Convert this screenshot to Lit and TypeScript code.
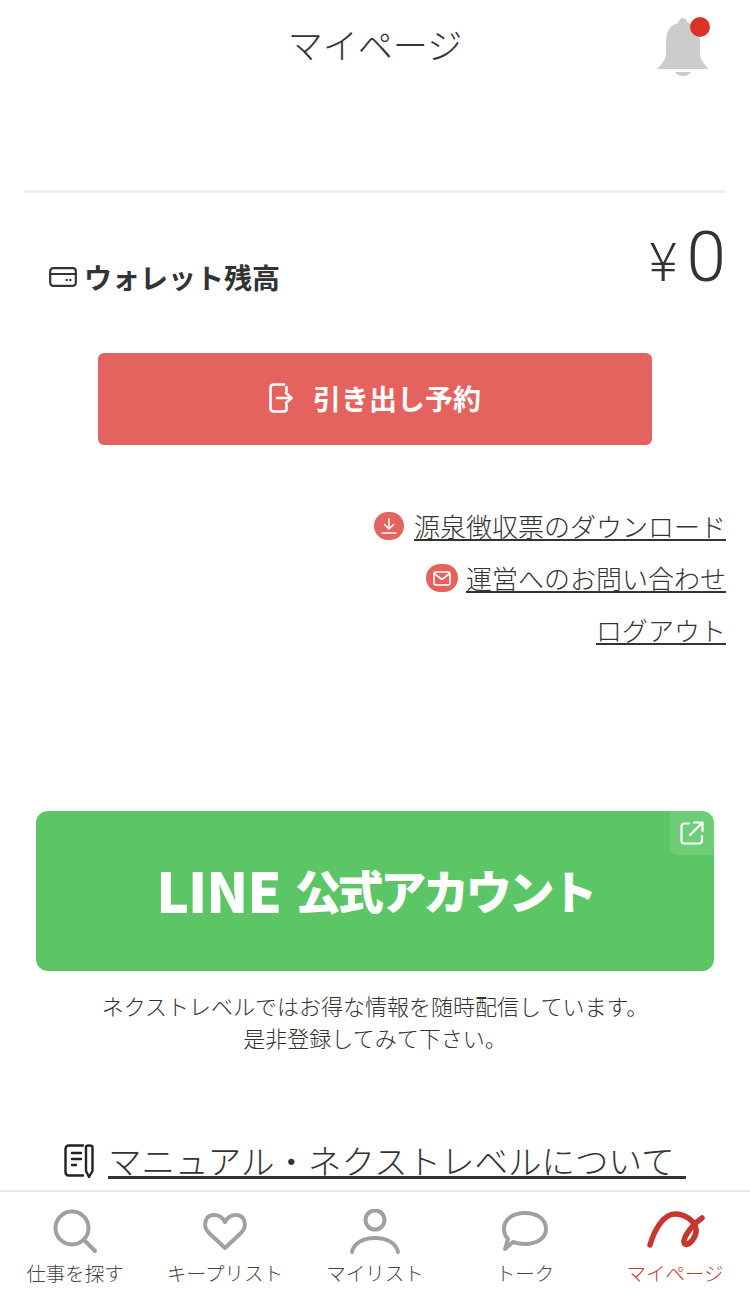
import { LitElement, html, css, svg } from "lit";
import { customElement } from "lit/decorators.js";

const tabs = [
  {
    label: "仕事を探す",
    icon: svg`<circle cx="27" cy="19" r="16.5"/><path d="M39 31 L50 42"/>`,
  },
  {
    label: "キープリスト",
    icon: svg`<path d="M30 39 L14 24 C7 17 10 6 19 6 C24 6 28 9 30 13 C32 9 36 6 41 6 C50 6 53 17 46 24 Z"/>`,
  },
  {
    label: "マイリスト",
    icon: svg`<circle cx="30" cy="11" r="9.5"/><path d="M7 43 C9 34 18 29 30 29 C42 29 51 34 53 43"/>`,
  },
  {
    label: "トーク",
    icon: svg`<path d="M10 40 L13 30 C10 27 9 23 9 20 C9 10 18 4 30 4 C42 4 51 10 51 20 C51 29 42 35 30 35 C25 35 21 34 18 33 Z"/>`,
  },
  {
    label: "マイページ",
    active: true,
    icon: svg`<path d="M5 36 C9 22 18 5 30 5 C40 5 50 12 51 20 C52 28 44 37 40 35 C36 33 43 19 57 9"/>`,
  },
];

@customElement("app-root")
export class AppRoot extends LitElement {
  static styles = css`
    :host {
      display: block;
      font-family: "Noto Sans CJK JP", sans-serif;
      color: #333;
      background: #fff;
    }
    .page {
      height: 1291px;
      display: flex;
      flex-direction: column;
      overflow: hidden;
    }
    .main {
      flex: 1;
      min-height: 0;
      overflow: hidden;
    }
    .header {
      position: relative;
      height: 190px;
      margin: 0 24px;
      border-bottom: 3px solid #eeeeee;
      text-align: center;
    }
    .title {
      font-size: 35px;
      font-weight: 300;
      line-height: 87px;
    }
    .bell {
      position: absolute;
      left: 633px;
      top: 18px;
      width: 52px;
      height: 58px;
    }
    .bell svg {
      display: block;
      fill: #cccccc;
    }
    .dot {
      position: absolute;
      left: 33px;
      top: -1px;
      width: 20px;
      height: 20px;
      border-radius: 50%;
      background: #dc3329;
    }
    .wallet {
      height: 106px;
      margin: 0 24px;
      display: flex;
      justify-content: space-between;
      align-items: flex-start;
    }
    .wallet-label {
      display: flex;
      align-items: center;
      gap: 7px;
      margin: 63px 0 0 25px;
      font-size: 28px;
      font-weight: 700;
      line-height: 42px;
    }
    .balance {
      display: flex;
      align-items: baseline;
      gap: 9px;
      margin: 20px 0 0 0;
      line-height: 88px;
    }
    .yen {
      font-size: 54px;
      font-weight: 300;
    }
    .amount {
      font-family: Roboto, sans-serif;
      font-size: 71px;
      font-weight: 300;
    }
    .withdraw {
      width: 554px;
      height: 92px;
      margin: 54px auto 0;
      box-sizing: border-box;
      padding-bottom: 2px;
      display: flex;
      align-items: center;
      justify-content: center;
      gap: 20px;
      border-radius: 6px;
      background: #e5635e;
      color: #fff;
      font-size: 28px;
      font-weight: 700;
    }
    .links {
      margin: 55px 24px 0;
      display: flex;
      flex-direction: column;
      align-items: flex-end;
    }
    .link {
      height: 52px;
      display: flex;
      align-items: center;
      gap: 10px;
    }
    .link span {
      font-size: 26px;
      font-weight: 300;
      line-height: 27px;
      border-bottom: 2px solid #333;
    }
    .badge {
      width: 30px;
      height: 28px;
      border-radius: 14px;
      background: #e5635e;
      display: flex;
      align-items: center;
      justify-content: center;
    }
    .badge.mail {
      width: 32px;
      margin-right: -2px;
    }
    .line {
      position: relative;
      height: 160px;
      box-sizing: border-box;
      padding-bottom: 4px;
      margin: 155px 36px 0;
      border-radius: 12px;
      background: #5cc666;
      color: #fff;
      display: flex;
      align-items: center;
      justify-content: center;
      font-weight: 900;
      white-space: nowrap;
    }
    .line-en {
      font-size: 55px;
      margin-right: 14px;
      letter-spacing: -1px;
    }
    .line-ja {
      font-size: 46px;
      letter-spacing: -3.3px;
    }
    .ext {
      position: absolute;
      right: 0;
      top: 0;
      width: 44px;
      height: 44px;
      border-radius: 0 12px 0 8px;
      background: rgba(255, 255, 255, 0.12);
      display: flex;
      align-items: center;
      justify-content: center;
    }
    .desc {
      margin-top: 18px;
      text-align: center;
      font-size: 22px;
      font-weight: 300;
      line-height: 32px;
    }
    .manual {
      margin-top: 91px;
      padding-left: 64px;
      display: flex;
      align-items: center;
      gap: 14px;
    }
    .manual span {
      font-size: 33.5px;
      font-weight: 300;
      line-height: 32px;
      padding: 0 11.5px 0 0;
      border-bottom: 3px solid #333;
      white-space: nowrap;
    }
    .tabbar {
      flex: none;
      height: 99px;
      border-top: 2px solid #e6e6e6;
      display: grid;
      grid-template-columns: repeat(5, 150px);
      background: #fff;
    }
    .tab {
      display: flex;
      flex-direction: column;
      align-items: center;
      padding-top: 17px;
      font-size: 19.5px;
      font-weight: 300;
      line-height: 24px;
      color: #444;
    }
    .tab svg {
      display: block;
      flex: none;
      height: 52px;
      fill: none;
      stroke: #a0a0a0;
      stroke-width: 4;
      stroke-linecap: round;
      stroke-linejoin: round;
    }
    .tab.active {
      color: #c8372d;
    }
    .tab.active svg {
      stroke: #c8372d;
      stroke-width: 5.5;
    }
    .ico {
      display: block;
      fill: none;
      stroke-linecap: round;
      stroke-linejoin: round;
    }
  `;

  render() {
    return html`
      <div class="page">
        <div class="main">
          <div class="header">
            <div class="title">マイページ</div>
            <div class="bell">
              <svg width="52" height="58" viewBox="0 0 52 58">
                <path d="M26 0 C29 0 30 3 31 5 C39 7 43 14 43 24 V36 C43 42 48 47 52 51 H0 C4 47 9 42 9 36 V24 C9 14 13 7 21 5 C22 3 23 0 26 0 Z"/>
                <path d="M18 54 H34 C33 56 30 58 26 58 C22 58 19 56 18 54 Z"/>
              </svg>
              <div class="dot"></div>
            </div>
          </div>

          <div class="wallet">
            <div class="wallet-label">
              <svg class="ico" width="28" height="20" viewBox="0 0 28 20" stroke="#333" stroke-width="2.2">
                <rect x="1.2" y="1.2" width="25.6" height="17.6" rx="3"/>
                <path d="M1.2 7 H26.8"/>
                <path d="M17.5 13 H18 M21 13 H21.5"/>
              </svg>
              ウォレット残高
            </div>
            <div class="balance">
              <span class="yen">¥</span><span class="amount">0</span>
            </div>
          </div>

          <div class="withdraw">
            <svg class="ico" width="24" height="30" viewBox="0 0 24 30" stroke="#fff" stroke-width="2.6">
              <path d="M15 1.5 H5 C2.8 1.5 1.5 2.8 1.5 5 V25 C1.5 27.2 2.8 28.5 5 28.5 H15 C16.5 28.5 17.5 27.5 17.5 26 V22 M17.5 8 V4"/>
              <path d="M8 15 H22 M17 10 L22.5 15 L17 20"/>
            </svg>
            引き出し予約
          </div>

          <div class="links">
            <div class="link">
              <div class="badge">
                <svg class="ico" width="18" height="18" viewBox="0 0 18 18" stroke="#fff" stroke-width="1.6">
                  <path d="M9 2 V11 M4.5 7.5 L9 12 L13.5 7.5 M2 16 H16"/>
                </svg>
              </div>
              <span>源泉徴収票のダウンロード</span>
            </div>
            <div class="link">
              <div class="badge mail">
                <svg class="ico" width="18" height="15" viewBox="0 0 18 15" stroke="#fff" stroke-width="1.6">
                  <rect x="1" y="1" width="16" height="13" rx="2"/>
                  <path d="M2 3 L9 8.5 L16 3"/>
                </svg>
              </div>
              <span>運営へのお問い合わせ</span>
            </div>
            <div class="link"><span>ログアウト</span></div>
          </div>

          <div class="line">
            <span class="line-en">LINE</span><span class="line-ja">公式アカウント</span>
            <div class="ext">
              <svg class="ico" width="24" height="24" viewBox="0 0 24 24" stroke="#fff" stroke-width="2.2">
                <path d="M9 2.5 H4.5 C2.8 2.5 1.5 3.8 1.5 5.5 V19.5 C1.5 21.2 2.8 22.5 4.5 22.5 H19 C20.7 22.5 22 21.2 22 19.5 V15"/>
                <path d="M10 14 L22.5 1.5 M14 1.5 H22.5 V10"/>
              </svg>
            </div>
          </div>

          <div class="desc">
            ネクストレベルではお得な情報を随時配信しています。<br />是非登録してみて下さい。
          </div>

          <div class="manual">
            <svg class="ico" width="30" height="35" viewBox="0 0 30 35" stroke="#222" stroke-width="2.4">
              <path d="M19 1.5 H5 C2.8 1.5 1.5 2.8 1.5 5 V28 C1.5 30.2 2.8 31.5 5 31.5 H19"/>
              <path d="M8 9 H17 M8 15 H17 M8 21 H12"/>
              <path d="M22 3 C22 2 23 1.5 25 1.5 C27 1.5 28.5 2 28.5 3 V27 L25 33 L22 27 Z"/>
            </svg>
            <span>マニュアル・ネクストレベルについて</span>
          </div>
        </div>

        <div class="tabbar">
          ${tabs.map(
            (t) => html`
              <div class="tab ${t.active ? "active" : ""}">
                <svg width="60" viewBox="0 0 60 52">${t.icon}</svg>
                <div>${t.label}</div>
              </div>
            `
          )}
        </div>
      </div>
    `;
  }
}
